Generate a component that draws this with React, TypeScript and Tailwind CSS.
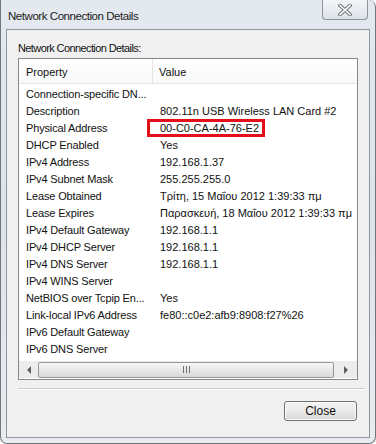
import React from 'react';

const rows: [string, string][] = [
  ['Connection-specific DN...', ''],
  ['Description', '802.11n USB Wireless LAN Card #2'],
  ['Physical Address', '00-C0-CA-4A-76-E2'],
  ['DHCP Enabled', 'Yes'],
  ['IPv4 Address', '192.168.1.37'],
  ['IPv4 Subnet Mask', '255.255.255.0'],
  ['Lease Obtained', 'Τρίτη, 15 Μαΐου 2012 1:39:33 πμ'],
  ['Lease Expires', 'Παρασκευή, 18 Μαΐου 2012 1:39:33 πμ'],
  ['IPv4 Default Gateway', '192.168.1.1'],
  ['IPv4 DHCP Server', '192.168.1.1'],
  ['IPv4 DNS Server', '192.168.1.1'],
  ['IPv4 WINS Server', ''],
  ['NetBIOS over Tcpip En...', 'Yes'],
  ['Link-local IPv6 Address', 'fe80::c0e2:afb9:8908:f27%26'],
  ['IPv6 Default Gateway', ''],
  ['IPv6 DNS Server', ''],
];

const CloseX = () => (
  <svg width="14" height="12" viewBox="0 0 14 12">
    <path d="M2 1.5 L12 10.5 M12 1.5 L2 10.5" stroke="#6b6f76" strokeWidth="3.6" strokeLinecap="square" />
    <path d="M2 1.5 L12 10.5 M12 1.5 L2 10.5" stroke="#ffffff" strokeWidth="1.6" strokeLinecap="square" />
  </svg>
);

export default function App() {
  return (
    <div
      className="w-[376px] h-[444px] flex flex-col border border-t-0 border-[#6f7780] rounded-b-[7px] rounded-tr-[7px] bg-gradient-to-b from-[#e4e9ef] via-[#dfe4ea] to-[#e9ebee] text-[#111]"
      style={{ fontFamily: '"Liberation Sans", Arial, sans-serif' }}
    >
      {/* title bar */}
      <div className="h-[29px] flex items-start justify-between shrink-0">
        <span className="pl-[7px] pt-[9px] text-[11.5px] leading-[14px] tracking-[-0.45px] text-[#1b1b1b]">Network Connection Details</span>
        <div className="mr-[7px] w-[46px] h-[20px] flex items-center justify-center border border-t-0 border-[#8c939c] rounded-b-[4px] bg-gradient-to-b from-[#f3f5f8] to-[#dde2e8]">
          <CloseX />
        </div>
      </div>

      {/* client area */}
      <div className="mx-[5px] h-[409px] border border-[#8e969f] bg-[#f0f0f0] flex flex-col pl-[11px] pt-[11px]">
        <div className="h-[14px] text-[11px] leading-[14px] tracking-[-0.6px]">Network Connection Details:</div>

        <div className="mt-[3px] w-[340px] h-[322px] border border-[#828790] bg-white flex flex-col">
          <div className="h-[25px] flex text-[11px] border-b border-[#e3e5e8] bg-gradient-to-b from-white to-[#f7f8f9] shrink-0">
            <div className="w-[134px] pl-[7px] pt-[2px] flex items-center border-r border-[#e3e5e8]">Property</div>
            <div className="pl-[6px] pt-[2px] flex items-center">Value</div>
          </div>

          <div className="flex-1 flex flex-col text-[11px]">
            {rows.map(([k, v]) => (
              <div key={k} className="h-[17px] pt-[3px] flex items-center">
                <div className="w-[134px] pl-[7px] whitespace-nowrap tracking-[-0.15px]">{k}</div>
                <div className="pl-[7px] whitespace-nowrap">
                  {k === 'Physical Address' ? (
                    <span className="inline-block -ml-[13px] pl-[10px] pr-[3px] border-[3px] border-[#e3101c] leading-[12px]">{v}</span>
                  ) : (
                    v
                  )}
                </div>
              </div>
            ))}
          </div>

          {/* horizontal scrollbar */}
          <div className="h-[17px] flex items-center bg-[#ececec] shrink-0 mb-[1px]">
            <div className="w-[19px] flex justify-center">
              <div className="w-0 h-0 border-y-[4px] border-y-transparent border-r-[4px] border-r-[#606060]" />
            </div>
            <div className="w-[296px] h-[16px] border border-[#979797] rounded-[2px] bg-gradient-to-b from-[#f6f6f6] to-[#dadada] flex items-center justify-center gap-[2px]">
              <div className="w-px h-[7px] bg-[#707070]" />
              <div className="w-px h-[7px] bg-[#707070]" />
              <div className="w-px h-[7px] bg-[#707070]" />
            </div>
            <div className="flex-1 flex justify-center">
              <div className="w-0 h-0 border-y-[4px] border-y-transparent border-l-[4px] border-l-[#606060]" />
            </div>
          </div>
        </div>

        <div className="mt-[8px] w-[346px] border-t border-[#c9c9c9] border-b border-b-white" />

        <div className="mt-[11px] ml-[266px] w-[73px] h-[20px] border border-[#707070] rounded-[3px] bg-gradient-to-b from-[#f3f3f3] via-[#ebebeb] to-[#d6d6d6] flex items-center justify-center text-[12px] shadow-[inset_0_0_0_1px_#fcfcfc]">
          Close
        </div>
      </div>
    </div>
  );
}
